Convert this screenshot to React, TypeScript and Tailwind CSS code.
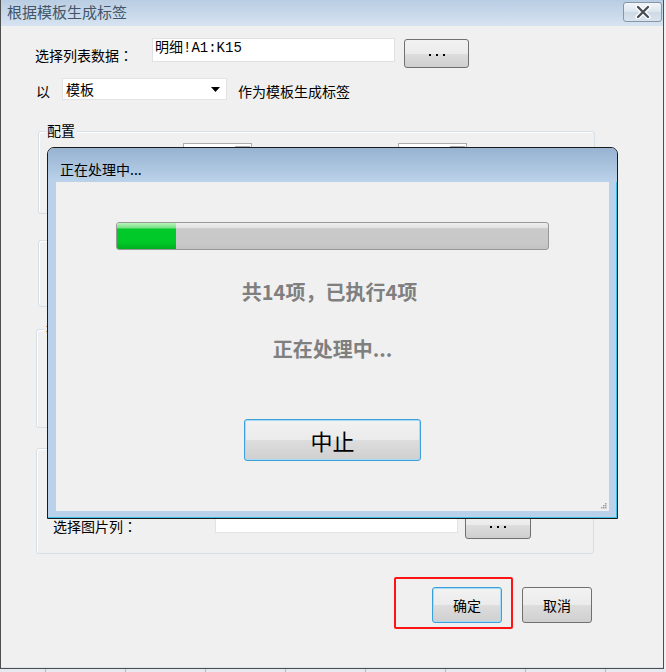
import React from "react";

const winBtn =
  "bg-[linear-gradient(to_bottom,#f2f2f2_0%,#ebebeb_50%,#dddddd_51%,#cfcfcf_100%)] rounded-[3px] border";

// centred full-width punctuation, as in the original dialog font
const punct = "font-['Noto_Sans_CJK_JP',sans-serif]";

function DotsButton({ className = "" }: { className?: string }) {
  return (
    <div className={`${winBtn} border-[#707070] flex items-center justify-center ${className}`}>
      <span className="flex gap-[5px] pt-[3px]">
        <span className="h-[2px] w-[2px] bg-black" />
        <span className="h-[2px] w-[2px] bg-black" />
        <span className="h-[2px] w-[2px] bg-black" />
      </span>
    </div>
  );
}

function GroupBox({
  className,
  legend,
  legendClass = "",
  children,
}: {
  className: string;
  legend?: string;
  legendClass?: string;
  children?: React.ReactNode;
}) {
  return (
    <div
      className={`relative shrink-0 rounded-[3px] border border-[#d5dfe5] shadow-[inset_1px_1px_0_#ffffff] ${className}`}
    >
      {legend && (
        <span
          className={`absolute bg-[#f0f0f0] px-[2px] text-[14px] leading-[14px] ${legendClass}`}
        >
          {legend}
        </span>
      )}
      {children}
    </div>
  );
}

function SmallCombo({ className = "" }: { className?: string }) {
  return (
    <div className={`flex h-[20px] w-[69px] border border-[#acacac] bg-white ${className}`}>
      <div className="flex-1" />
      <div className="mt-[2px] mr-[1px] h-[14px] w-[15px] border border-[#acacac] bg-[#e9e9e9]" />
    </div>
  );
}

export default function App() {
  return (
    <div className="relative h-[672px] w-[666px] overflow-hidden bg-[#f0f0f0] font-['Noto_Sans_CJK_SC','Noto_Sans',sans-serif] text-black [text-spacing-trim:space-all]">
      {/* main window */}
      <div className="flex h-[669px] w-[664px] flex-col border-x border-b border-[#4e4e4e]">
        {/* title bar */}
        <div className="flex h-[26px] shrink-0 items-start justify-between bg-[linear-gradient(to_bottom,#b9cde2,#d6e3f1)] pl-[6px] pr-[1px]">
          <span className="pt-[3px] text-[15px] leading-[18px] text-[#425568]">根据模板生成标签</span>
          <div className="mt-[2px] flex h-[20px] w-[39px] items-center justify-center rounded-[3px] border border-[#8696a8] bg-[linear-gradient(to_bottom,#f1f5f9,#dbe4ee_50%,#cdd9e6_51%,#d9e3ee)]">
            <svg width="16" height="14" viewBox="0 0 16 14">
              <path d="M3 2 L13 12 M13 2 L3 12" stroke="#ffffff" strokeWidth="5" strokeLinecap="round" />
              <path d="M3 2 L13 12 M13 2 L3 12" stroke="#4a4f55" strokeWidth="2.4" strokeLinecap="round" />
            </svg>
          </div>
        </div>

        {/* body */}
        <div className="flex flex-1 flex-col border-b border-[#d9e4ef] pl-[34px] pt-[12px]">
          {/* row 1 */}
          <div className="flex h-[30px] items-start">
            <span className="w-[117px] pt-[10px] text-[14px] leading-[14px]">
              选择列表数据<span className={punct}>：</span>
            </span>
            <div className="h-[24px] w-[243px] border border-[#dfe1e5] bg-white pl-[2px] pt-[1px] font-['Liberation_Mono','Noto_Sans_CJK_SC',monospace] text-[14px] leading-[16px]">
              明细!A1:K15
            </div>
            <DotsButton className="ml-[9px] mt-[1px] h-[29px] w-[65px]" />
          </div>

          {/* row 2 */}
          <div className="mt-[10px] flex h-[22px] items-start">
            <span className="w-[27px] pl-[1px] pt-[6px] text-[14px] leading-[14px]">以</span>
            <div className="flex h-[22px] w-[165px] items-start justify-between border border-[#e3e3e3] bg-white pl-[3px] pr-[6px]">
              <span className="pt-[3px] text-[14px] leading-[14px]">模板</span>
              <svg width="9" height="5" viewBox="0 0 9 5" className="mt-[8px]">
                <path d="M0 0 H9 L4.5 5 Z" fill="#000" />
              </svg>
            </div>
            <span className="ml-[11px] pt-[6px] text-[14px] leading-[14px]">作为模板生成标签</span>
          </div>

          <GroupBox
            className="ml-[3px] mt-[31px] h-[83px] w-[557px]"
            legend="配置"
            legendClass="left-[6px] -top-[9px]"
          >
            <div className="mt-[11px] flex">
              <SmallCombo className="ml-[144px]" />
              <SmallCombo className="ml-[146px]" />
            </div>
          </GroupBox>

          <GroupBox className="ml-[3px] mt-[26px] h-[67px] w-[557px]" />

          <GroupBox
            className="ml-[1px] mt-[22px] h-[99px] w-[558px]"
            legend="打印设置"
            legendClass="left-[7px] -top-[8px]"
          />

          <GroupBox className="ml-[1px] mt-[20px] h-[106px] w-[558px]">
            <div className="flex items-start pl-[16px] pt-[62px]">
              <span className="w-[162px] pt-[8px] text-[14px] leading-[14px]">
                选择图片列<span className={punct}>：</span>
              </span>
              <div className="mt-[2px] h-[20px] w-[243px] border border-[#e3e3e3] bg-white" />
              <DotsButton className="ml-[7px] h-[28px] w-[66px]" />
            </div>
          </GroupBox>

          {/* bottom buttons */}
          <div className="mt-[23px] flex items-start">
            <div className="ml-[359px] h-[52px] w-[119px] rounded-[2px] border-2 border-[#ff1414] pl-[36px] pt-[8px]">
              <div
                className={`${winBtn} flex h-[36px] w-[70px] items-center justify-center border-[#3c9fd8] shadow-[inset_0_0_0_1px_#a8dcf5] text-[14px]`}
              >
                确定
              </div>
            </div>
            <div
              className={`${winBtn} ml-[9px] mt-[10px] flex h-[36px] w-[70px] items-center justify-center border-[#707070] text-[14px]`}
            >
              取消
            </div>
          </div>
        </div>
      </div>

      {/* spreadsheet strip behind */}
      <div className="flex h-[3px] bg-[#e6eaf0]">
        <div className="w-[46px] shrink-0 border-r border-[#aeb8c8]" />
        {Array.from({ length: 8 }).map((_, i) => (
          <div key={i} className="w-[80px] shrink-0 border-r border-[#aeb8c8]" />
        ))}
      </div>

      {/* progress dialog */}
      <div className="absolute left-[47px] top-[147px] flex h-[372px] w-[571px] flex-col rounded-t-[7px] border border-[#1b1b1b] bg-[#b9d1ea] shadow-[inset_-1px_-1px_0_#3cc0e4]">
        <div className="h-[34px] shrink-0 rounded-t-[6px] bg-[linear-gradient(to_bottom,#97b3d1,#bbd2ea)] pl-[12px] pt-[14px] text-[14px] leading-[14px]">
          正在处理中...
        </div>
        <div className="flex flex-1 pb-[7px] pl-[8px] pr-[8px]">
          <div className="relative flex flex-1 flex-col items-center bg-[#f0f0f0] pt-[40px]">
            <div className="flex h-[28px] w-[433px] overflow-hidden rounded-[3px] border border-[#989898] bg-[linear-gradient(to_bottom,#eeeeee_0%,#e2e2e2_18%,#cacaca_22%,#c8c8c8_80%,#c2c2c2_100%)]">
              <div className="h-full w-[59px] bg-[linear-gradient(to_bottom,#b8f5b8_0%,#7ee08a_18%,#02c92b_24%,#00c827_75%,#00ae20_100%)]" />
            </div>
            <div className="mt-[30px] pr-[6px] text-[20px] font-bold leading-[24px] text-[#7f7f7f]">
              共14项<span className={punct}>，</span>已执行4项
            </div>
            <div className="mt-[33px] text-[20px] font-bold leading-[24px] text-[#7f7f7f]">
              正在处理中...
            </div>
            <div
              className={`${winBtn} mt-[58px] flex h-[42px] w-[177px] items-center justify-center border-[#3ca0da] shadow-[inset_0_0_0_1px_#a8dcf5] text-[22px] leading-[24px]`}
            >
              中止
            </div>
            <svg width="8" height="8" viewBox="0 0 8 8" className="absolute bottom-[2px] right-[2px]">
              <rect x="6" y="2" width="1.5" height="1.5" fill="#a0a0a0" />
              <rect x="4" y="4" width="1.5" height="1.5" fill="#a0a0a0" />
              <rect x="6" y="4" width="1.5" height="1.5" fill="#a0a0a0" />
              <rect x="2" y="6" width="1.5" height="1.5" fill="#a0a0a0" />
              <rect x="4" y="6" width="1.5" height="1.5" fill="#a0a0a0" />
              <rect x="6" y="6" width="1.5" height="1.5" fill="#a0a0a0" />
            </svg>
          </div>
        </div>
      </div>
    </div>
  );
}
